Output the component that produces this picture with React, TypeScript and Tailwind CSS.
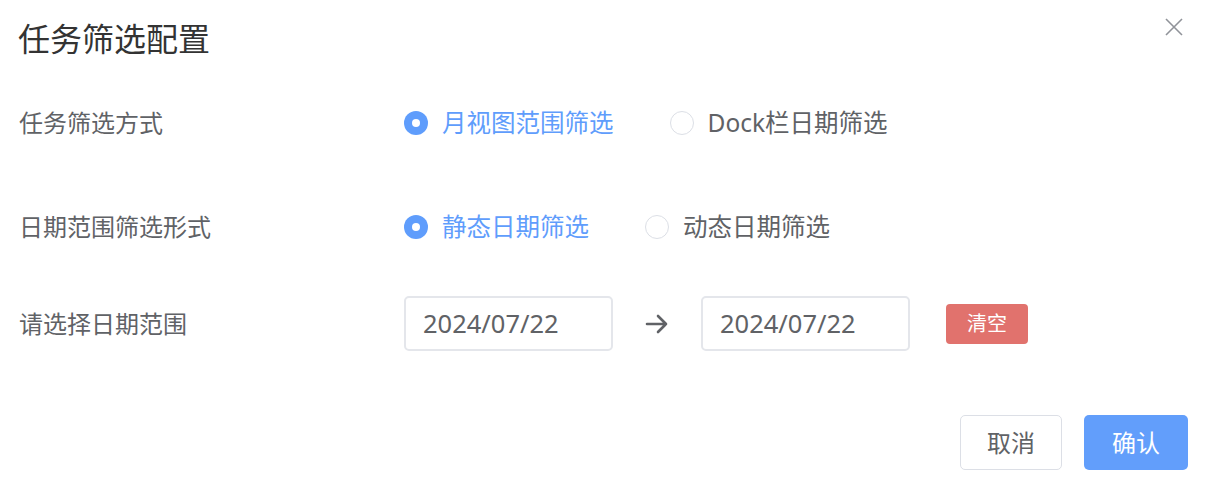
import { useState } from 'react';

const font = { fontFamily: '"Noto Sans", "Noto Sans CJK SC", sans-serif' };

function Radio({ checked, label, onClick }: { checked: boolean; label: string; onClick: () => void }) {
  return (
    <button onClick={onClick} className="flex items-center mr-[56px] cursor-pointer">
      <span
        className={`w-[24px] h-[24px] rounded-full flex items-center justify-center ${
          checked ? 'bg-[#5f9dfc]' : 'border border-[#dcdfe6] bg-white'
        }`}
      >
        {checked && <span className="w-[8px] h-[8px] rounded-full bg-white" />}
      </span>
      <span className={`ml-[14px] text-[24.5px] leading-none ${checked ? 'text-[#5f9dfc]' : 'text-[#606266]'}`}>
        {label}
      </span>
    </button>
  );
}

export default function App() {
  const [mode, setMode] = useState(0);
  const [range, setRange] = useState(0);

  return (
    <div className="w-full h-[479px] bg-white" style={font}>
      {/* Header */}
      <div className="flex justify-between items-start pl-[18px] pr-[21px] pt-[19px]">
        <h1 className="text-[32px] leading-[40px] text-[#333333]">任务筛选配置</h1>
        <button className="mt-[-2px] text-[#909399]">
          <svg width="20" height="20" viewBox="0 0 20 20" fill="none" stroke="currentColor" strokeWidth="1.6">
            <path d="M2 2 L18 18 M18 2 L2 18" />
          </svg>
        </button>
      </div>

      {/* Row 1 */}
      <div className="flex items-center h-[56px] mt-[36px]">
        <div className="w-[404px] shrink-0 pl-[19px] text-[24px] text-[#606266]">任务筛选方式</div>
        <Radio checked={mode === 0} label="月视图范围筛选" onClick={() => setMode(0)} />
        <Radio checked={mode === 1} label="Dock栏日期筛选" onClick={() => setMode(1)} />
      </div>

      {/* Row 2 */}
      <div className="flex items-center h-[56px] mt-[48px]">
        <div className="w-[404px] shrink-0 pl-[19px] text-[24px] text-[#606266]">日期范围筛选形式</div>
        <Radio checked={range === 0} label="静态日期筛选" onClick={() => setRange(0)} />
        <Radio checked={range === 1} label="动态日期筛选" onClick={() => setRange(1)} />
      </div>

      {/* Row 3 */}
      <div className="flex items-center h-[55px] mt-[41px]">
        <div className="w-[404px] shrink-0 pl-[19px] text-[24px] text-[#606266]">请选择日期范围</div>
        <div className="w-[209px] h-[55px] border-2 border-[#e4e6eb] rounded-[5px] flex items-center pl-[17px] text-[25.5px] text-[#606266]">
          2024/07/22
        </div>
        <div className="w-[88px] flex justify-center text-[#606266]">
          <svg width="24" height="22" viewBox="0 0 24 22" fill="none" stroke="currentColor" strokeWidth="2.6" strokeLinecap="round" strokeLinejoin="round">
            <path d="M2 11 H21 M13 3 L21 11 L13 19" />
          </svg>
        </div>
        <div className="w-[209px] h-[55px] border-2 border-[#e4e6eb] rounded-[5px] flex items-center pl-[17px] text-[25.5px] text-[#606266]">
          2024/07/22
        </div>
        <button className="ml-[36px] w-[82px] h-[40px] rounded-[4px] bg-[#e1726d] text-white text-[20px]">清空</button>
      </div>

      {/* Footer */}
      <div className="flex justify-end gap-[22px] pr-[17px] mt-[64px]">
        <button className="w-[102px] h-[55px] border border-[#dcdfe6] rounded-[5px] bg-white text-[24px] text-[#606266]">
          取消
        </button>
        <button className="w-[104px] h-[55px] rounded-[5px] bg-[#629efb] text-[24px] text-white">确认</button>
      </div>
    </div>
  );
}
